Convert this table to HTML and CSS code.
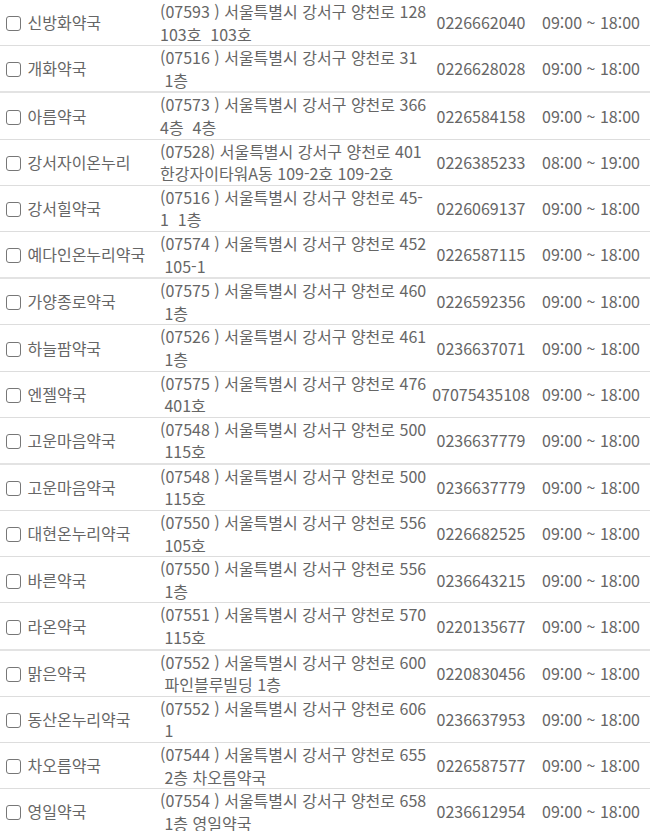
FILE: index.html
```html
<!DOCTYPE html>
<html lang="ko">
<head>
    <meta charset="UTF-8">
    <meta name="viewport" content="width=device-width, initial-scale=1.0">
    <title>약국 목록</title>
    <link rel="stylesheet" href="styles.css">
</head>
<body>
    <table class="pharmacy-list">
        <colgroup>
            <col class="col-name">
            <col class="col-addr">
            <col class="col-tel">
            <col class="col-time">
        </colgroup>
        <tbody>
            <tr>
                <td class="name"><input type="checkbox"> 신방화약국</td>
                <td class="addr">(07593 ) 서울특별시 강서구 양천로 128<br>103호 &nbsp;103호</td>
                <td class="tel">0226662040</td>
                <td class="time">09:00 ~ 18:00</td>
            </tr>
            <tr>
                <td class="name"><input type="checkbox"> 개화약국</td>
                <td class="addr">(07516 ) 서울특별시 강서구 양천로 31<br>&nbsp;1층</td>
                <td class="tel">0226628028</td>
                <td class="time">09:00 ~ 18:00</td>
            </tr>
            <tr>
                <td class="name"><input type="checkbox"> 아름약국</td>
                <td class="addr">(07573 ) 서울특별시 강서구 양천로 366<br>4층 &nbsp;4층</td>
                <td class="tel">0226584158</td>
                <td class="time">09:00 ~ 18:00</td>
            </tr>
            <tr>
                <td class="name"><input type="checkbox"> 강서자이온누리</td>
                <td class="addr">(07528) 서울특별시 강서구 양천로 401<br>한강자이타워A동 109-2호 109-2호</td>
                <td class="tel">0226385233</td>
                <td class="time">08:00 ~ 19:00</td>
            </tr>
            <tr>
                <td class="name"><input type="checkbox"> 강서힐약국</td>
                <td class="addr">(07516 ) 서울특별시 강서구 양천로 45-<br>1 &nbsp;1층</td>
                <td class="tel">0226069137</td>
                <td class="time">09:00 ~ 18:00</td>
            </tr>
            <tr>
                <td class="name"><input type="checkbox"> 예다인온누리약국</td>
                <td class="addr">(07574 ) 서울특별시 강서구 양천로 452<br>&nbsp;105-1</td>
                <td class="tel">0226587115</td>
                <td class="time">09:00 ~ 18:00</td>
            </tr>
            <tr>
                <td class="name"><input type="checkbox"> 가양종로약국</td>
                <td class="addr">(07575 ) 서울특별시 강서구 양천로 460<br>&nbsp;1층</td>
                <td class="tel">0226592356</td>
                <td class="time">09:00 ~ 18:00</td>
            </tr>
            <tr>
                <td class="name"><input type="checkbox"> 하늘팜약국</td>
                <td class="addr">(07526 ) 서울특별시 강서구 양천로 461<br>&nbsp;1층</td>
                <td class="tel">0236637071</td>
                <td class="time">09:00 ~ 18:00</td>
            </tr>
            <tr>
                <td class="name"><input type="checkbox"> 엔젤약국</td>
                <td class="addr">(07575 ) 서울특별시 강서구 양천로 476<br>&nbsp;401호</td>
                <td class="tel">07075435108</td>
                <td class="time">09:00 ~ 18:00</td>
            </tr>
            <tr>
                <td class="name"><input type="checkbox"> 고운마음약국</td>
                <td class="addr">(07548 ) 서울특별시 강서구 양천로 500<br>&nbsp;115호</td>
                <td class="tel">0236637779</td>
                <td class="time">09:00 ~ 18:00</td>
            </tr>
            <tr>
                <td class="name"><input type="checkbox"> 고운마음약국</td>
                <td class="addr">(07548 ) 서울특별시 강서구 양천로 500<br>&nbsp;115호</td>
                <td class="tel">0236637779</td>
                <td class="time">09:00 ~ 18:00</td>
            </tr>
            <tr>
                <td class="name"><input type="checkbox"> 대현온누리약국</td>
                <td class="addr">(07550 ) 서울특별시 강서구 양천로 556<br>&nbsp;105호</td>
                <td class="tel">0226682525</td>
                <td class="time">09:00 ~ 18:00</td>
            </tr>
            <tr>
                <td class="name"><input type="checkbox"> 바른약국</td>
                <td class="addr">(07550 ) 서울특별시 강서구 양천로 556<br>&nbsp;1층</td>
                <td class="tel">0236643215</td>
                <td class="time">09:00 ~ 18:00</td>
            </tr>
            <tr>
                <td class="name"><input type="checkbox"> 라온약국</td>
                <td class="addr">(07551 ) 서울특별시 강서구 양천로 570<br>&nbsp;115호</td>
                <td class="tel">0220135677</td>
                <td class="time">09:00 ~ 18:00</td>
            </tr>
            <tr>
                <td class="name"><input type="checkbox"> 맑은약국</td>
                <td class="addr">(07552 ) 서울특별시 강서구 양천로 600<br>&nbsp;파인블루빌딩 1층</td>
                <td class="tel">0220830456</td>
                <td class="time">09:00 ~ 18:00</td>
            </tr>
            <tr>
                <td class="name"><input type="checkbox"> 동산온누리약국</td>
                <td class="addr">(07552 ) 서울특별시 강서구 양천로 606<br>&nbsp;1</td>
                <td class="tel">0236637953</td>
                <td class="time">09:00 ~ 18:00</td>
            </tr>
            <tr>
                <td class="name"><input type="checkbox"> 차오름약국</td>
                <td class="addr">(07544 ) 서울특별시 강서구 양천로 655<br>&nbsp;2층 차오름약국</td>
                <td class="tel">0226587577</td>
                <td class="time">09:00 ~ 18:00</td>
            </tr>
            <tr>
                <td class="name"><input type="checkbox"> 영일약국</td>
                <td class="addr">(07554 ) 서울특별시 강서구 양천로 658<br>&nbsp;1층 영일약국</td>
                <td class="tel">0236612954</td>
                <td class="time">09:00 ~ 18:00</td>
            </tr>
        </tbody>
    </table>
</body>
</html>
```

FILE: styles.css
```css
body {
    margin: 0;
    font-family: "Noto Sans CJK KR", "Noto Sans", sans-serif;
    font-size: 16px;
    color: #666;
    background-color: white;
}
.pharmacy-list {
    width: 650px;
    border-collapse: collapse;
    table-layout: fixed;
}
.col-name {
    width: 155px;
}
.col-addr {
    width: 275px;
}
.col-tel {
    width: 102px;
}
.col-time {
    width: 118px;
}
.pharmacy-list td {
    padding: 0;
    line-height: 22.6px;
    vertical-align: middle;
    border-bottom: 1px solid #ddd;
    white-space: nowrap;
}
.pharmacy-list tr:nth-child(4n+2) td {
    border-bottom: 2px solid #e3e3e3;
}
.name {
    padding-left: 3px !important;
}
.name input {
    appearance: none;
    -webkit-appearance: none;
    box-sizing: border-box;
    width: 15px;
    height: 15px;
    margin: 0 2px 0 3px;
    border: 1.5px solid #777;
    border-radius: 3px;
    background-color: white;
    vertical-align: -2px;
}
.addr {
    padding-left: 5px !important;
}
.tel,
.time {
    text-align: center;
}
```
